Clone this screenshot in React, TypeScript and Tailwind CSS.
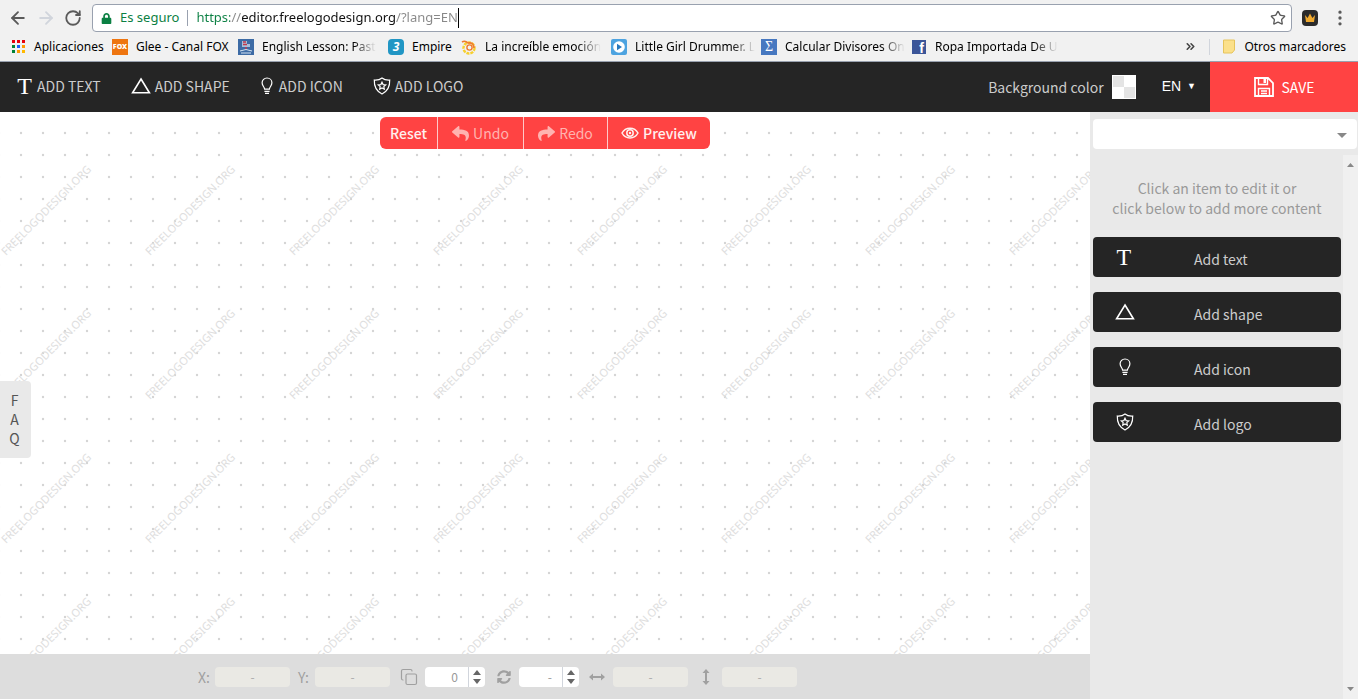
import { ReactNode } from "react"
import { ArrowLeft, ArrowRight, ChevronsRight, Copy, EllipsisVertical, RotateCw, Star } from "lucide-react"
import { FaLock, FaReply, FaShare, FaSyncAlt } from "react-icons/fa"
import clsx from "clsx"

const WATERMARK_STEP = 144
const APP_DOTS = [
  "bg-red-600", "bg-red-600", "bg-red-600",
  "bg-green-700", "bg-blue-600", "bg-amber-500",
  "bg-green-700", "bg-amber-500", "bg-amber-400",
]

function TextIcon() {
  return (
    <span aria-hidden="true" className="w-[17px] font-['Liberation_Serif',serif] text-2xl leading-5 text-white">
      T
    </span>
  )
}

function ShapeIcon() {
  return (
    <svg width="20" height="18" viewBox="0 0 20 18" fill="none" stroke="white" strokeWidth="1.6">
      <path d="M10 2 L18.4 15.8 H1.6 Z" />
    </svg>
  )
}

function BulbIcon() {
  return (
    <svg width="15" height="18" viewBox="-1 0 15 18" fill="none" stroke="white" strokeWidth="1.2">
      <path d="M3.6 12.2 C3.4 9.8 1.1 8.9 1.1 5.8 C1.1 3 3.3 1 6 1 C8.7 1 10.9 3 10.9 5.8 C10.9 8.9 8.6 9.8 8.4 12.2 Z" />
      <path d="M3.4 14.3 H8.6 M4 16.3 H8" />
    </svg>
  )
}

function LogoIcon() {
  return (
    <svg width="18" height="18" viewBox="0 0 18 18" fill="none" stroke="white" strokeWidth="1.2">
      <path d="M9 1 C7 2.6 4.5 3.2 1.3 3 C1 9.5 3 14 9 17 C15 14 17 9.5 16.7 3 C13.5 3.2 11 2.6 9 1 Z" />
      <path d="M9 5.2 L10.1 7.6 L12.7 7.9 L10.8 9.6 L11.3 12.2 L9 10.9 L6.7 12.2 L7.2 9.6 L5.3 7.9 L7.9 7.6 Z" />
    </svg>
  )
}

function SaveIcon() {
  return (
    <svg width="20" height="20" viewBox="0 0 20 20" fill="none" stroke="currentColor" strokeWidth="1.8">
      <path d="M1 1 H14 L19 6 V19 H1 Z" />
      <path d="M4.5 1 V7.5 H13.5 V1 M4.5 19 V11.5 H15.5 V19 M7 14 H13 M7 16.5 H13" strokeWidth="1.4" />
      <path d="M9.5 2 H12 V6 H9.5 Z" fill="currentColor" stroke="none" />
    </svg>
  )
}

function PreviewIcon() {
  return (
    <svg width="18" height="12" viewBox="0 0 18 12" fill="none" stroke="currentColor" strokeWidth="1.5">
      <path d="M1 6 C4.5 -0.5 13.5 -0.5 17 6 C13.5 12.5 4.5 12.5 1 6 Z" />
      <circle cx="9" cy="6" r="3.2" />
      <circle cx="9" cy="6" r="1.2" fill="currentColor" stroke="none" />
    </svg>
  )
}

const tools = [
  { label: "text", icon: <TextIcon /> },
  { label: "shape", icon: <ShapeIcon /> },
  { label: "icon", icon: <BulbIcon /> },
  { label: "logo", icon: <LogoIcon /> },
]

interface BookmarkProps {
  label: string
  width: string
  faded?: boolean
  children: ReactNode
}

function Bookmark({ label, width, faded, children }: BookmarkProps) {
  return (
    <a href="#" className={clsx("flex shrink-0 items-center gap-2", width)}>
      <span className="flex size-4 shrink-0 items-center justify-center">{children}</span>
      <span className={clsx("whitespace-nowrap", faded && "mask-r-from-80% mask-r-to-100%")}>{label}</span>
    </a>
  )
}

function BrowserBar() {
  return (
    <div className="border-b border-gray-400 bg-[#f1f1f1] font-['Noto_Sans','Open_Sans',sans-serif] text-black">
      <div className="flex h-9 items-center px-2">
        <div className="flex w-21 shrink-0 items-center gap-2 text-[#5a5a5a]">
          <button aria-label="Back"><ArrowLeft size={20} strokeWidth={2.2} /></button>
          <button aria-label="Forward" className="text-gray-300"><ArrowRight size={20} strokeWidth={2.2} /></button>
          <button aria-label="Reload"><RotateCw size={18} strokeWidth={2.4} /></button>
        </div>
        <div className="flex h-7 flex-1 items-center rounded-sm border border-gray-400 bg-white px-2 text-[13px]">
          <FaLock className="mr-2 text-[#0b8043]" size={11} />
          <span className="text-[#0b8043]">Es seguro</span>
          <span className="mx-2 h-4 w-px bg-gray-400" />
          <input
            aria-label="Address"
            defaultValue="https://editor.freelogodesign.org/?lang=EN"
            className="field-sizing-content bg-[linear-gradient(90deg,#0b8043_34px,#888_34px,#888_46px,#111_46px,#111_199px,#888_199px)] bg-clip-text text-transparent outline-none"
          />
          <span className="h-5 w-px bg-black" />
          <button aria-label="Bookmark this page" className="mr-[-3px] ml-auto text-[#5a5a5a]">
            <Star size={16} />
          </button>
        </div>
        <button aria-label="Extension" className="ml-2.5 flex size-4 items-center justify-center rounded-sm bg-[#2b2b2b]">
          <svg width="12" height="10" viewBox="0 0 12 10" fill="#f0a92e">
            <path d="M1 2 L3.6 5 L6 0.5 L8.4 5 L11 2 L10 9 H2 Z" />
          </svg>
        </button>
        <button aria-label="Menu" className="ml-3 text-[#5a5a5a]"><EllipsisVertical size={20} /></button>
      </div>

      {/* Bookmarks */}
      <div className="flex h-[25px] items-center gap-3 pr-3 pb-1 pl-2.5 text-xs">
        <Bookmark label="Aplicaciones" width="w-[90px]">
          <span className="grid grid-cols-3 gap-0.5">
            {APP_DOTS.map((color, index) => (
              <span key={index} className={clsx("size-[3px]", color)} />
            ))}
          </span>
        </Bookmark>
        <Bookmark label="Glee - Canal FOX" width="w-[114px]">
          <span className="flex size-4 items-center justify-center bg-[#ee7510] text-[7px] font-black text-white">FOX</span>
        </Bookmark>
        <Bookmark label="English Lesson: Past" width="w-[138px]" faded>
          <svg width="16" height="16" viewBox="0 0 16 16">
            <path d="M0 0 H16 V16 H0 Z" fill="#3d6ba5" />
            <path d="M4 2 H9 V5 H12 V8 H4 Z" fill="#a9bfd9" />
            <path d="M5 3 H8 M5 5.5 H9 M8 8 V10" stroke="#c3394b" strokeWidth="1.5" />
            <path d="M2 12 Q8 9 14 12 M3 14 H13" stroke="#d5e4f2" fill="none" />
          </svg>
        </Bookmark>
        <Bookmark label="Empire" width="w-[61px]">
          <span className="flex size-4 items-center justify-center rounded-sm bg-[#2196c4] text-xs font-bold text-white italic">3</span>
        </Bookmark>
        <Bookmark label="La increíble emoción" width="w-[138px]" faded>
          <svg width="16" height="16" viewBox="0 0 16 16" fill="none">
            <circle cx="8" cy="9" r="5.5" stroke="#f7cf2d" strokeWidth="2.4" strokeDasharray="3 1" />
            <path d="M1 3 Q4 1 7 4 Q13 3 13 9" stroke="#ef7b2f" strokeWidth="1.6" />
            <circle cx="8.5" cy="8.5" r="2.6" stroke="#ef7b2f" strokeWidth="1.4" />
          </svg>
        </Bookmark>
        <Bookmark label="Little Girl Drummer. L" width="w-[138px]" faded>
          <svg width="16" height="16" viewBox="0 0 16 16">
            <rect width="16" height="16" rx="2" fill="#4da3e0" />
            <circle cx="8" cy="8" r="5.8" fill="white" />
            <path d="M6 4.8 L11 8 L6 11.2 Z" fill="#2878bd" />
          </svg>
        </Bookmark>
        <Bookmark label="Calcular Divisores On" width="w-[138px]" faded>
          <span className="flex size-4 items-center justify-center bg-[#4778c0] font-['Liberation_Serif',serif] text-sm leading-4 text-white">Σ</span>
        </Bookmark>
        <Bookmark label="Ropa Importada De U" width="w-[138px]" faded>
          <span className="flex size-3.5 items-end justify-end bg-[#3b5598] pr-0.5 font-['Liberation_Sans',sans-serif] text-sm leading-3 font-bold text-white">f</span>
        </Bookmark>
        <button aria-label="More bookmarks" className="ml-auto text-[#444]"><ChevronsRight size={13} strokeWidth={3} /></button>
        <span className="h-4 w-px bg-gray-300" />
        <a href="#" className="flex shrink-0 items-center gap-2">
          <svg width="14" height="15" viewBox="0 0 14 15">
            <path d="M1.5 1 H12.5 V11 L10 14 H1.5 Z" fill="#fbe08a" stroke="#e6c45c" />
          </svg>
          <span className="whitespace-nowrap">Otros marcadores</span>
        </a>
      </div>
    </div>
  )
}

function EditorHeader() {
  return (
    <header className="flex h-[50px] shrink-0 items-center bg-[#252525] pl-4 text-sm text-[#ccc]">
      <div className="flex gap-[30px] pb-0.5">
        {tools.map((tool) => (
          <button key={tool.label} className="flex items-center gap-1 uppercase">
            {tool.icon}
            Add {tool.label}
          </button>
        ))}
      </div>
      <div className="ml-auto flex items-center gap-2">
        Background color
        <button aria-label="Background color" className="grid size-6 grid-cols-2 border border-white bg-white">
          <span className="bg-[#e4e4e4]" />
          <span />
          <span />
          <span className="bg-[#e4e4e4]" />
        </button>
      </div>
      <button className="mr-3.5 ml-4 flex items-center gap-1.5 pb-0.5 pl-2.5 font-['Liberation_Sans',sans-serif] text-white">
        EN <span className="text-[9px]">▼</span>
      </button>
      <button className="flex h-full w-[148px] items-center justify-center gap-2 bg-[#ff4343] text-white">
        <SaveIcon />
        SAVE
      </button>
    </header>
  )
}

function Canvas() {
  const tiles = Array.from({ length: 8 * 4 }, (_, index) => ({
    x: (index % 8) * WATERMARK_STEP,
    y: Math.floor(index / 8) * WATERMARK_STEP,
  }))

  return (
    <div className="relative min-h-0 flex-1 overflow-hidden bg-white">
      {/* Dotted grid and watermark */}
      <svg className="absolute inset-0 size-full" aria-hidden="true">
        <defs>
          <pattern id="dots" x="10" y="10" width="22" height="22" patternUnits="userSpaceOnUse">
            <circle cx="11" cy="11" r="1.2" fill="#d4d4d4" />
          </pattern>
        </defs>
        <rect y="10" width="100%" height="100%" fill="url(#dots)" />
        {tiles.map((tile) => (
          <text
            key={`${tile.x}-${tile.y}`}
            transform={`translate(${tile.x + 6} ${tile.y + 144}) rotate(-45)`}
            className="font-['Noto_Sans',sans-serif] text-[11px]"
            fill="#dedede"
          >
            FREELOGODESIGN.ORG
          </text>
        ))}
      </svg>

      <div className="relative mt-[5px] flex justify-center">
        <div className="flex h-8 divide-x divide-red-200 overflow-hidden rounded-md bg-[#ff4343] text-sm text-[#fff0ee]">
          <button className="w-[58px] font-medium">Reset</button>
          <button disabled className="flex w-[86px] items-center justify-center gap-1 text-[#ffb3b0]">
            <FaReply size={17} /> Undo
          </button>
          <button disabled className="flex w-[84px] items-center justify-center gap-1 text-[#ffb3b0]">
            <FaShare size={17} /> Redo
          </button>
          <button className="flex w-[102px] items-center justify-center gap-1 font-medium">
            <PreviewIcon /> Preview
          </button>
        </div>
      </div>

      <button className="absolute top-[269px] left-0 flex h-[77px] w-[31px] flex-col items-center justify-center rounded-r-sm bg-[#e9e9e9] pr-0.5 text-sm leading-[19px] text-[#555]">
        <span>F</span>
        <span>A</span>
        <span>Q</span>
      </button>
    </div>
  )
}

function DimensionField({ label }: { label: string }) {
  return (
    <input
      aria-label={label}
      defaultValue="-"
      disabled
      className="h-5 w-[75px] rounded-sm bg-[#eae9e4] text-center text-xs text-[#aaa]"
    />
  )
}

function Stepper({ label, value }: { label: string; value: string }) {
  return (
    <div className="flex h-5 w-[60px] overflow-hidden rounded-sm bg-white">
      <input aria-label={label} defaultValue={value} className="w-[43px] pr-2.5 text-right text-xs text-[#999]" />
      <div className="flex flex-1 flex-col items-center justify-center gap-1 border-l border-gray-300 text-[#666]">
        <button aria-label={`Increase ${label}`}>
          <svg width="8" height="5" viewBox="0 0 8 5" fill="currentColor" className="block"><path d="M4 0 L8 5 H0 Z" /></svg>
        </button>
        <button aria-label={`Decrease ${label}`}>
          <svg width="8" height="5" viewBox="0 0 8 5" fill="currentColor" className="block"><path d="M0 0 H8 L4 5 Z" /></svg>
        </button>
      </div>
    </div>
  )
}

function PropertiesBar() {
  return (
    <div className="flex h-[45px] shrink-0 items-center bg-[#ddd] pl-[198px] text-sm text-[#a0a0a0]">
      <span className="w-[17px]">X:</span>
      <DimensionField label="X" />
      <span className="ml-2 w-[17px]">Y:</span>
      <DimensionField label="Y" />
      <Copy className="mr-[7px] ml-2.5" size={18} strokeWidth={1.6} />
      <Stepper label="Opacity" value="0" />
      <FaSyncAlt className="mr-2 ml-3" size={14} />
      <Stepper label="Rotation" value="-" />
      <svg className="mr-2 ml-2.5" width="16" height="8" viewBox="0 0 16 8" fill="currentColor">
        <path d="M0 4 L4 0.5 V3 H12 V0.5 L16 4 L12 7.5 V5 H4 V7.5 Z" />
      </svg>
      <DimensionField label="Width" />
      <svg className="mr-3 ml-3.5" width="8" height="16" viewBox="0 0 8 16" fill="currentColor">
        <path d="M4 0 L7.5 4 H5 V12 H7.5 L4 16 L0.5 12 H3 V4 H0.5 Z" />
      </svg>
      <DimensionField label="Height" />
    </div>
  )
}

function Sidebar() {
  return (
    <aside className="flex w-[268px] shrink-0 flex-col bg-[#e9e9e9] pt-[7px]">
      <div className="relative mr-px ml-[3px]">
        <select aria-label="Layer" className="block h-[30px] w-full appearance-none rounded-sm bg-white">
          <option value="" />
        </select>
        <svg className="pointer-events-none absolute top-3.5 right-2.5" width="10" height="5" viewBox="0 0 10 5" fill="#888">
          <path d="M0 0 H10 L5 5 Z" />
        </svg>
      </div>
      <div className="mt-1.5 flex min-h-0 flex-1">
        <div className="flex-1 pr-0.5 pl-[3px]">
          <p className="pt-[23px] text-center text-sm leading-5 text-[#999]">
            Click an item to edit it or
            <br />
            click below to add more content
          </p>
          <div className="mt-[19px] flex flex-col gap-[15px]">
            {tools.map((tool) => (
              <button
                key={tool.label}
                className="flex h-10 items-center rounded-sm bg-[#252525] text-left text-sm text-[#ccc]"
              >
                <span className="flex w-16 justify-center">{tool.icon}</span>
                <span className="pt-1 pl-[37px]">Add {tool.label}</span>
              </button>
            ))}
          </div>
        </div>
        {/* Scrollbar */}
        <div className="flex w-[15px] flex-col items-center justify-between bg-[#f0f0f0] py-2">
          <svg width="7" height="4" viewBox="0 0 7 4" fill="#888"><path d="M3.5 0 L7 4 H0 Z" /></svg>
          <svg width="7" height="4" viewBox="0 0 7 4" fill="#888"><path d="M0 0 H7 L3.5 4 Z" /></svg>
        </div>
      </div>
    </aside>
  )
}

export default function App() {
  return (
    <div className="flex h-screen flex-col overflow-hidden font-['Noto_Sans_CJK_SC','Noto_Sans',sans-serif]">
      <BrowserBar />
      <EditorHeader />
      <div className="flex min-h-0 flex-1">
        <main className="flex min-w-0 flex-1 flex-col">
          <Canvas />
          <PropertiesBar />
        </main>
        <Sidebar />
      </div>
    </div>
  )
}
